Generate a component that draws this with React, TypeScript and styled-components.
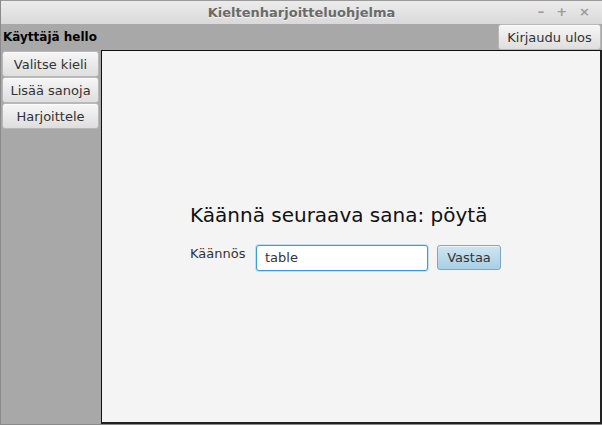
import React, { useState } from "react";
import styled, { createGlobalStyle } from "styled-components";

const GlobalStyle = createGlobalStyle`
  html, body {
    margin: 0;
    padding: 0;
    background: #a8a8a8;
  }
  * {
    box-sizing: border-box;
  }
`;

export default function App() {
  const [answer, setAnswer] = useState("table");
  const menu = ["Valitse kieli", "Lisää sanoja", "Harjoittele"];

  return (
    <>
      <GlobalStyle />
      <StyledWindow>
        <TitleBar>
          <span className="title">Kieltenharjoitteluohjelma</span>
          <div className="controls">
            <span>–</span>
            <span>+</span>
            <span>×</span>
          </div>
        </TitleBar>
        <TopBar>
          <UserName>Käyttäjä hello</UserName>
          <FxButton $wide>Kirjaudu ulos</FxButton>
        </TopBar>
        <Main>
          <Sidebar>
            {menu.map((item) => (
              <FxButton key={item}>{item}</FxButton>
            ))}
          </Sidebar>
          <Content>
            <Exercise>
              <Question>Käännä seuraava sana: pöytä</Question>
              <AnswerRow>
                <Label>Käännös</Label>
                <Field value={answer} onChange={(e) => setAnswer(e.target.value)} autoFocus />
                <FxButton $primary>Vastaa</FxButton>
              </AnswerRow>
            </Exercise>
          </Content>
        </Main>
      </StyledWindow>
    </>
  );
}

const StyledWindow = styled.div`
  width: 602px;
  height: 425px;
  display: flex;
  flex-direction: column;
  background: #a8a8a8;
  font-family: "DejaVu Sans", sans-serif;
  border-left: 1px solid #8a8a8a;
  border-bottom: 1px solid #8a8a8a;
  overflow: hidden;
`;

const TitleBar = styled.div`
  height: 24px;
  flex: none;
  position: relative;
  display: flex;
  align-items: center;
  justify-content: center;
  background: linear-gradient(#ececec, #d9d9d9);
  border-top: 1px solid #9a9a9a;
  .title {
    font-weight: bold;
    font-size: 13px;
    color: #6a6a6a;
    text-shadow: 0 1px 0 #f6f6f6;
  }
  .controls {
    position: absolute;
    right: 12px;
    top: 3px;
    display: flex;
    gap: 12px;
    font-size: 13px;
    font-weight: bold;
    color: #9c9c9c;
  }
`;

const TopBar = styled.div`
  height: 26px;
  flex: none;
  display: flex;
  align-items: stretch;
  justify-content: space-between;
  background: #a8a8a8;
  padding-right: 1px;
`;

const UserName = styled.span`
  align-self: center;
  padding-left: 2px;
  font-size: 12px;
  font-weight: bold;
  color: #000;
`;

const FxButton = styled.button<{ $wide?: boolean; $primary?: boolean }>`
  font-family: "DejaVu Sans", sans-serif;
  font-size: 13px;
  color: #333;
  height: ${(p) => (p.$primary ? "25px" : "26px")};
  width: ${(p) => (p.$wide ? "103px" : p.$primary ? "64px" : "97px")};
  padding: 0;
  border: 1px solid ${(p) => (p.$primary ? "#7fa7bf" : "#b8b8b8")};
  border-radius: 3px;
  background: ${(p) =>
    p.$primary
      ? "linear-gradient(#cfe5f2, #a8cfe4)"
      : "linear-gradient(#f6f6f6, #dedede)"};
  box-shadow: inset 0 1px 0 rgba(255, 255, 255, 0.6);
  flex: none;
`;

const Main = styled.div`
  flex: 1;
  display: flex;
  min-height: 0;
`;

const Sidebar = styled.div`
  width: 100px;
  flex: none;
  display: flex;
  flex-direction: column;
  padding: 1px 0 0 1px;
`;

const Content = styled.div`
  flex: 1;
  display: flex;
  align-items: center;
  justify-content: center;
  background: #f4f4f4;
  border-top: 1px solid #111;
  border-left: 1px solid #111;
  border-right: 2px solid #222;
  border-bottom: 2px solid #222;
  padding-right: 12px;
`;

const Exercise = styled.div`
  display: flex;
  flex-direction: column;
  width: 310px;
  gap: 18px;
  margin-top: 0;
`;

const Question = styled.div`
  font-size: 20px;
  color: #111;
`;

const AnswerRow = styled.div`
  display: flex;
  align-items: flex-start;
`;

const Label = styled.span`
  width: 66px;
  flex: none;
  font-size: 13px;
  color: #333;
  padding-top: 1px;
`;

const Field = styled.input`
  width: 172px;
  height: 26px;
  margin-right: 9px;
  padding: 0 8px;
  font-family: "DejaVu Sans", sans-serif;
  font-size: 13px;
  color: #333;
  border: 1px solid #3b9cd6;
  border-radius: 3px;
  box-shadow: 0 0 0 1px #bfe0f4;
  outline: none;
  background: #fff;
`;
